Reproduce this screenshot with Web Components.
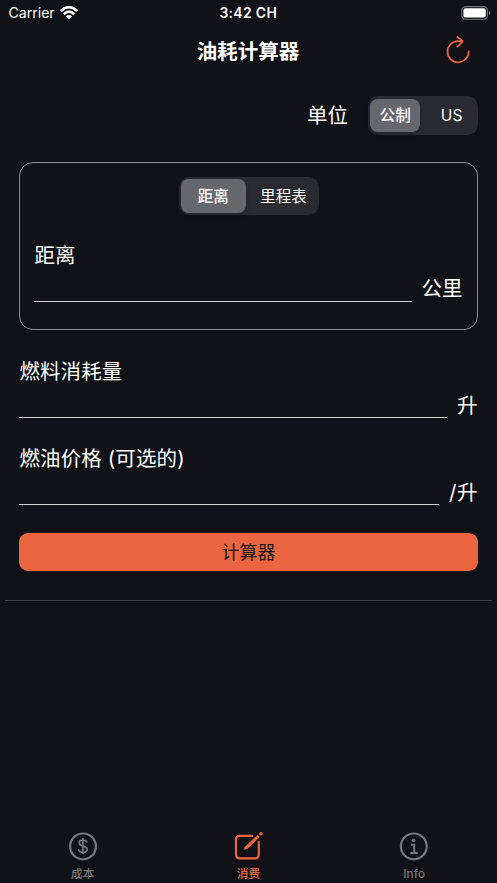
<!DOCTYPE html>
<html lang="zh-CN">
<head>
<meta charset="utf-8">
<title>油耗计算器</title>
<style>
html,body{margin:0;height:100%;background:#111217;}
body{font-family:Inter,"Noto Sans CJK SC",sans-serif;color:#fff;overflow:hidden;}
</style>
</head>
<body>
<fuel-app></fuel-app>
<script>
const define = (name, html) => {
  const template = document.createElement('template');
  template.innerHTML = html;
  customElements.define(name, class extends HTMLElement {
    constructor() {
      super();
      this.attachShadow({mode: 'open'}).appendChild(template.content.cloneNode(true));
    }
  });
};

define('status-bar', `
<style>
:host{display:grid;grid-template-columns:1fr auto 1fr;align-items:center;height:26px;box-sizing:border-box;padding:0 6px 0 8.5px;font-size:14.2px;line-height:20px}
.left{display:flex;align-items:center;gap:5.5px;letter-spacing:-.05px}
.time{font-weight:600;font-size:13.9px;letter-spacing:.35px;margin-right:3px}
.right{justify-self:end;display:flex}
svg{display:block}
</style>
<div class="left"><span>Carrier</span>
<svg width="18" height="14" viewBox="0 0 18 14" fill="none" stroke="#fff" stroke-width="2.6"><path d="M.8 5.1Q9-2.7 17.2 5.1"/><path d="M3.7 8.2Q9 3.2 14.3 8.2"/><path d="M9 13.4 5.9 10.3Q9 7.7 12.1 10.3Z" fill="#fff" stroke="none"/></svg></div>
<span class="time">3:42 CH</span>
<div class="right"><svg width="30" height="14" viewBox="0 0 30 14"><rect x=".8" y=".6" width="25.6" height="12.6" rx="3.7" fill="none" stroke="#77787b" stroke-width="1.1"/><rect x="2.4" y="2.2" width="22.4" height="9.4" rx="2.2" fill="#fff"/><path d="M28 4.8q1.6.7 1.6 2.2T28 9.2Z" fill="#77787b"/></svg></div>`);

define('nav-bar', `
<style>
:host{display:grid;grid-template-columns:1fr auto 1fr;align-items:center;height:50px;padding-right:26px;padding-left:26px}
h1{grid-column:2;margin:0;padding:2px 1px 0 0;font-size:20.5px;line-height:30px;font-weight:600}
svg{justify-self:end;display:block}
</style>
<h1><slot></slot></h1>
<svg width="26" height="30" viewBox="0 0 26 30" fill="none" stroke="#eb6541" stroke-width="1.7" stroke-linecap="round" stroke-linejoin="round"><path d="M23.7 15.4a10.6 10.6 0 1 1-10.6-10.3h4.6M12.4.8l5.5 4.5-5.5 5.4"/></svg>`);

define('segment-item', `
<style>
:host{display:flex;align-items:center;justify-content:center;box-sizing:border-box;padding-top:1px;border-radius:7.5px;font-size:15.6px;line-height:20px}
:host([selected]){background:#66666d;font-weight:500;box-shadow:0 2px 5px #0003}
:host(:not([selected])){padding-left:5px}
</style><slot></slot>`);

define('segmented-control', `
<style>
:host{display:grid;grid-template-columns:var(--cols);box-sizing:border-box;width:var(--width);height:38.4px;padding:2.3px;border-radius:10.5px;background:#2a2b30}
</style><slot></slot>`);

define('unit-field', `
<style>
:host{display:flex;flex-direction:column;height:62px;font-size:20.5px;line-height:30px}
.label{height:30px;padding-top:1px;box-sizing:border-box}
.row{display:flex;align-items:flex-end;gap:10px;height:32px}
.line{flex:1;height:1px;background:#cfcfd0}
.unit{height:27.5px}
</style>
<div class="label"><slot name="label"></slot></div>
<div class="row"><div class="line"></div><div class="unit"><slot></slot></div></div>`);

define('group-card', `
<style>
:host{display:flex;flex-direction:column;align-items:center;box-sizing:border-box;height:168px;border:1px solid #8c8c90;border-radius:14px;padding:14px 14px 0}
::slotted(unit-field){align-self:stretch;margin-top:24.6px}
</style><slot></slot>`);

define('action-button', `
<style>
:host{display:block}
button{display:block;width:100%;height:38.3px;margin:0;padding:0;border:0;border-radius:9px;background:#eb6541;color:#17171a;font:400 18px/38px Inter,"Noto Sans CJK SC",sans-serif}
button slot{display:block;padding-top:1px;line-height:37px}
</style><button><slot></slot></button>`);

define('tab-item', `
<style>
:host{display:flex;flex-direction:column;align-items:center;gap:4px;color:#77787b;font-size:11.7px;line-height:18px;font-weight:500}
:host([selected]){color:#eb6541}
::slotted(svg){display:block}
span{letter-spacing:.1px}
</style><slot name="icon"></slot><span><slot></slot></span>`);

define('tab-bar', `
<style>
:host{display:grid;grid-template-columns:repeat(3,1fr);height:52px}
</style><slot></slot>`);

define('fuel-app', `
<style>
:host{display:flex;flex-direction:column;height:883px;width:497px;background:#111217}
main{display:flex;flex-direction:column;flex:1;padding:20px 19.4px 0}
.units{display:flex;justify-content:flex-end;align-items:center;gap:20px;height:39px;font-size:20.5px;line-height:30px;margin-bottom:27px}
.fuel{margin-top:26px}
.price{margin-top:25px}
action-button{margin-top:28px}
hr{border:0;height:1px;background:#3e3e42;margin:28.7px -14px 0}
</style>
<status-bar></status-bar>
<nav-bar>油耗计算器</nav-bar>
<main>
<div class="units"><span>单位</span><segmented-control style="--cols:49.5px 1fr;--width:109.5px"><segment-item selected>公制</segment-item><segment-item style="padding-left:8px">US</segment-item></segmented-control></div>
<group-card>
<segmented-control style="--cols:65px 1fr;--width:140px"><segment-item selected>距离</segment-item><segment-item>里程表</segment-item></segmented-control>
<unit-field><span slot="label">距离</span>公里</unit-field>
</group-card>
<unit-field class="fuel"><span slot="label" style="letter-spacing:.1px">燃料消耗量</span>升</unit-field>
<unit-field class="price"><span slot="label" style="letter-spacing:.12px">燃油价格 (可选的)</span><span style="letter-spacing:.8px">/</span>升</unit-field>
<action-button>计算器</action-button>
<hr>
</main>
<tab-bar>
<tab-item><svg slot="icon" width="30" height="30" viewBox="0 0 30 30" fill="none" stroke="currentColor" stroke-width="2.2"><circle cx="15" cy="15.4" r="12.9"/><path transform="translate(0 .3)" d="M19 11.4c-.3-1.8-1.8-2.7-4-2.7s-3.8 1.1-3.8 2.9c0 4.2 8 2.2 8 6.4 0 2-1.8 3.2-4.2 3.2-2.5 0-4.1-1.2-4.3-3.1M15 7v16" stroke-width="1.7"/></svg>成本</tab-item>
<tab-item selected><svg slot="icon" width="30" height="30" viewBox="0 0 30 30" fill="none" stroke="currentColor" stroke-width="2.2"><path d="M20 4.9H6.3A3.3 3.3 0 0 0 3 8.2v15.9a3.3 3.3 0 0 0 3.3 3.3h16.2a3.3 3.3 0 0 0 3.3-3.3V10.3"/><path d="m12.4 18.6-1.6.3.9-2.8L24.5 3.9l2.2 2.2-12.2 11.7-3.5 1.2Z" fill="currentColor" stroke="none"/><circle cx="28" cy="2.7" r="1.8" fill="currentColor" stroke="none"/></svg>消费</tab-item>
<tab-item><svg slot="icon" width="30" height="30" viewBox="0 0 30 30" fill="none" stroke="currentColor" stroke-width="2.2"><circle cx="14.8" cy="15.4" r="12.9"/><circle cx="14.6" cy="9.3" r="1.8" fill="currentColor" stroke="none"/><path d="M12 13.8h3.2v8M11.4 21.9h7.3" stroke-width="2"/></svg>Info</tab-item>
</tab-bar>`);
</script>
</body>
</html>
